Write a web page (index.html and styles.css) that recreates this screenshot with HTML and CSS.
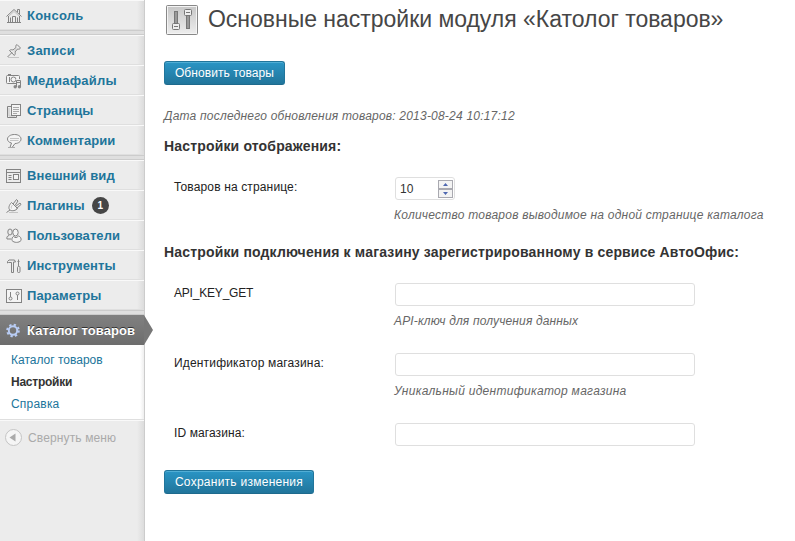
FILE: index.html
```
<!DOCTYPE html>
<html lang="ru">
<head>
<meta charset="utf-8">
<title>Основные настройки модуля</title>
<link rel="stylesheet" href="styles.css">
</head>
<body>
<div class="layout">
<nav class="menu">
  <a class="item wide"><svg class="icon" viewBox="0 0 16 16"><path d="M.5 8.500 8 1.500l7.500 7M2.500 8v6.500h11V8M11.500 4V1.500h2V6" /><path class="shade" d="M3 8 8 3.500 13 8"/><path d="M6.500 14.500v-6h3v6M4.500 14V9.500M11.500 14V9.500M1 14.500h14"/></svg><span>Консоль</span></a>
  <div class="separator"></div>
  <a class="item wide"><svg class="icon" viewBox="0 0 16 16"><path class="shade" d="M2 14.500h11"/><path d="M1.500 14 6 9.500M3.500 7.500c1-1 2.500-.8 3.500-.5L10 4.500C9.500 3 10 2 11 1.500l3.500 3.500c-.5 1-1.500 1.500-3 1L9 9c.5 1 .3 2.500-.7 3.500z"/><path class="shade" d="M8 8.500 11 5.500"/></svg><span>Записи</span></a>
  <a class="item wide"><svg class="icon" viewBox="0 0 16 16"><rect class="paper" x=".5" y="2.500" width="13" height="8" rx="1"/><path d="M2 1.500h3M3.500 4v5"/><circle cx="7.500" cy="6.500" r="2.500"/><path class="halo" d="M10 6h6v10H6v-4h4z"/><path d="M10.500 14V7.500h4V14M10.500 9.500h4"/><circle class="fill" cx="9.200" cy="13.800" r="1.700"/><circle class="fill" cx="13.400" cy="13.800" r="1.700"/></svg><span>Медиафайлы</span></a>
  <a class="item"><svg class="icon" viewBox="0 0 16 16"><path d="M5 3.500H1.500v11h9V13"/><path class="shade" d="M3 5v8h6"/><rect class="paper" x="5.500" y="1.500" width="9" height="11"/><path class="thin" d="M7 4.500h6M7 6.500h6M7 8.500h6M7 10.500h4"/></svg><span>Страницы</span></a>
  <a class="item"><svg class="icon" viewBox="0 0 16 16"><path class="paper" d="M8.500 1.500c4 0 6.500 2 6.500 4.500s-2.500 4.500-6 4.500L6 14.500H4L5.500 10C3 9.500 1.500 8 1.500 6c0-2.500 3-4.500 7-4.500z"/><path class="shade" d="M4 5.500h9M4 7.500h8.500"/><path class="thin" d="M2 14.500h7"/></svg><span>Комментарии</span></a>
  <div class="separator"></div>
  <a class="item"><svg class="icon" viewBox="0 0 16 16"><rect x=".5" y="1.500" width="14" height="13"/><path d="M1 4.500h13M2.500 7.500h3M2.500 9.500h3M2.500 11.500h3"/><rect class="paper" x="7.500" y="6.500" width="5" height="5"/></svg><span>Внешний вид</span></a>
  <a class="item"><svg class="icon" viewBox="0 0 16 16"><path class="shade" d="M3 14.500h9"/><path class="paper" d="M5.500 4.500 11.500 10.500C10 12.500 6 13.500 4 12S3 7 5.500 4.500z"/><path d="m7 6 3.500-4.500L12 3 9 7.500M9.500 8.500 14 5l1 1.500-4.500 4M4 12l-3.500 2.500"/><path class="shade" d="M6.500 7C5.500 8 5 9.500 5.500 10.500"/></svg><span>Плагины</span><b class="badge">1</b></a>
  <a class="item"><svg class="icon" viewBox="0 0 16 16"><ellipse cx="4" cy="4" rx="2.200" ry="3"/><path d="M3 7.500C1 8 .5 9.500 1 11h4"/><ellipse class="paper" cx="9.500" cy="4.500" rx="2.700" ry="3.500"/><path class="paper" d="M7.500 8.500c2 1.500 3 1.500 5-.5 2 .5 3 2.500 2.500 4.500-2 2.500-7 2.500-9 0-.5-2 .5-3.500 1.500-4z"/></svg><span>Пользователи</span></a>
  <a class="item"><svg class="icon" viewBox="0 0 16 16"><path d="M1.500 5V3.500L3 2h5.500l1 2H7.500v10.500h-2V4.500h-3z"/><path d="M12.500 1.500V8M11.500 3.500h2"/><rect x="11.500" y="8.500" width="2.500" height="6" rx="1"/></svg><span>Инструменты</span></a>
  <a class="item"><svg class="icon" viewBox="0 0 16 16"><rect class="paper" x=".5" y="1.500" width="15" height="13"/><path d="M4.500 4v5M11.500 7v5"/><circle cx="4.500" cy="10.500" r="1.500"/><circle cx="11.500" cy="5.500" r="1.500"/></svg><span>Параметры</span></a>
  <div class="separator"></div>
  <a class="item current"><svg class="icon gear" viewBox="0 0 16 16"><circle class="teeth" cx="7" cy="7.500" r="5.800"/><circle class="ring" cx="7" cy="7.500" r="4.200"/></svg><span>Каталог товаров</span><svg class="arrow" viewBox="0 0 9 30"><path d="M0 0 9 15 0 30z"/></svg></a>
  <div class="submenu">
    <a class="sub-a">Каталог товаров</a>
    <a class="sub-current">Настройки</a>
    <a class="sub-b">Справка</a>
  </div>
  <a class="collapse"><svg viewBox="0 0 18 18"><circle cx="8.500" cy="8.500" r="8"/><path d="M4.500 8.500l6-4v8z"/></svg><span>Свернуть меню</span></a>
</nav>
<main class="content">
  <header class="heading">
    <svg class="heading-icon" viewBox="0 0 34 32"><defs><linearGradient id="panel" x2="0" y2="1"><stop stop-color="#c6c6c6"/><stop offset="1" stop-color="#eee"/></linearGradient></defs><rect x="1.500" y=".5" width="31" height="29" rx="1" fill="url(#panel)" stroke="#888"/><rect x="2.500" y="1.500" width="29" height="27" fill="none" stroke="#f4f4f4"/><g fill="#999" stroke="#777"><rect x="9.500" y="6.500" width="3" height="13"/><rect x="21.500" y="10.500" width="3" height="13"/></g><g fill="#eee" stroke="#777"><rect x="7.500" y="18.500" width="7" height="6" rx="1"/><rect x="19.500" y="4.500" width="7" height="6" rx="1"/><path d="M9 21.500h4M21 7.500h4"/></g></svg>
    <h1>Основные настройки модуля «Католог товаров»</h1>
  </header>
  <button class="button update">Обновить товары</button>
  <p class="hint updated">Дата последнего обновления товаров: 2013-08-24 10:17:12</p>
  <h3 class="h-display">Настройки отображения:</h3>
  <div class="row row-count"><label class="l-count">Товаров на странице:</label><div><div class="field number"><span>10</span><svg class="spinner" viewBox="0 0 15 18"><g fill="#f3f3f3" stroke="#a9a9b0"><rect x=".5" y=".5" width="14" height="8"/><rect x=".5" y="9.500" width="14" height="8"/></g><path d="M5 6h5L7.500 3zM5 12h5l-2.500 3z" fill="#4f68b0"/></svg></div><p class="hint h-count">Количество товаров выводимое на одной странице каталога</p></div></div>
  <h3 class="h-connect">Настройки подключения к магазину зарегистрированному в сервисе АвтоОфис:</h3>
  <div class="row"><label class="l-api">API_KEY_GET</label><div><input class="field" type="text"><p class="hint h-api">API-ключ для получения данных</p></div></div>
  <div class="row"><label class="l-shop">Идентификатор магазина:</label><div><input class="field" type="text"><p class="hint h-shop">Уникальный идентификатор магазина</p></div></div>
  <div class="row row-last"><label class="l-id">ID магазина:</label><div><input class="field" type="text"></div></div>
  <button class="button save">Сохранить изменения</button>
</main>
</div>
</body>
</html>
```
FILE: styles.css
```
* { box-sizing: border-box; }
body { margin: 0; background: #fff; color: #333; font: 12px/16px "Liberation Sans", Arial, sans-serif; overflow: hidden; }
h1, h3, p { margin: 0; }
.layout { display: flex; height: 541px; }
.menu { width: 145px; flex: none; background: #ececec linear-gradient(to right, transparent 137px, #dcdcdc 144px); border-right: 1px solid #ccc; }
.item { display: flex; align-items: center; height: 30px; padding: 1px 0 0 6px; border-top: 1px solid #f9f9f9; border-bottom: 1px solid #dfdfdf; color: #21759b; font-size: 13px; font-weight: bold; white-space: nowrap; }
.item span { margin-left: 5px; letter-spacing: .07px; }
.wide span { letter-spacing: .24px; }
.icon { width: 16px; height: 16px; flex: none; fill: none; stroke: #838383; stroke-width: 1; }
.fill { fill: #888; stroke: none; }
.shade { stroke: #c4c4c4; }
.thin { stroke: #aaa; }
.paper { fill: #f4f4f4; }
.halo { fill: #ececec; stroke: none; }
.separator { height: 5px; background: #dfdfdf; border-top: 1px solid #ccc; border-bottom: 1px solid #ccc; }
.badge { width: 17px; height: 17px; margin-left: 7px; border-radius: 9px; background: #464646; color: #fff; font-size: 10px; line-height: 17px; text-align: center; }
.current { position: relative; background: linear-gradient(#808080, #6d6d6d); border-color: #808080 transparent #6d6d6d; color: #fff; text-shadow: 0 -1px 0 #333; }
.arrow { position: absolute; left: 144px; top: -1px; width: 9px; height: 30px; fill: #777; }
.gear { stroke: #b9cdf5; }
.teeth { stroke-width: 2; stroke-dasharray: 2.280 2.280; }
.ring { stroke-width: 2; }
.submenu { height: 75px; padding-top: 4px; background: #fff linear-gradient(to right, transparent 140px, #eee 144px); border-bottom: 1px solid #dfdfdf; }
.submenu a { display: block; height: 22px; padding-left: 11px; line-height: 22px; color: #21759b; }
.submenu .sub-current { color: #333; font-weight: bold; letter-spacing: -.25px; }
.submenu .sub-b { letter-spacing: .2px; }
.collapse { display: flex; align-items: center; height: 35px; padding-left: 5px; border-top: 1px solid #f9f9f9; color: #aaa; letter-spacing: .13px; }
.collapse svg { width: 18px; height: 18px; margin-right: 5px; fill: #f5f5f5; stroke: #c4c4c4; }
.collapse path { fill: #aaa; stroke: none; }
.content { flex: 1; padding-left: 19px; min-width: 0; }
.heading { display: flex; height: 61px; padding-top: 5px; }
.heading-icon { width: 34px; height: 32px; margin-left: 1px; }
h1 { margin-left: 9px; color: #464646; font-size: 23px; font-weight: normal; line-height: 29px; letter-spacing: -.02px; white-space: nowrap; }
.button { display: block; height: 24px; padding: 0; border: 1px solid #21759b; border-bottom-color: #1e6a8d; border-radius: 3px; background: linear-gradient(#2a95c5, #21759b); box-shadow: inset 0 1px 0 rgba(120,200,230,.5); color: #fff; font: 12px/22px "Liberation Sans", Arial, sans-serif; text-shadow: 0 1px 0 rgba(0,0,0,.1); white-space: nowrap; }
.update { width: 121px; letter-spacing: .08px; }
.save { width: 150px; letter-spacing: .26px; }
.hint { color: #666; font-style: italic; white-space: nowrap; }
.updated { height: 30px; margin-top: 23px; line-height: 17px; letter-spacing: .21px; }
h3 { height: 18px; color: #333; font-size: 14px; line-height: 18px; letter-spacing: .165px; white-space: nowrap; }
.h-display { margin-top: -1px; }
.row { display: grid; grid-template-columns: 221px 1fr; height: 70px; padding-left: 10px; }
.row label { padding-top: 2px; color: #222; }
.row-count { height: 66px; margin-top: 22px; }
.l-count { letter-spacing: .14px; }
.l-api { letter-spacing: -.2px; }
.l-shop { letter-spacing: .17px; }
.l-id { letter-spacing: .1px; }
.field { display: block; width: 300px; height: 23px; border: 1px solid #dfdfdf; border-radius: 3px; background: #fff; outline: 0; }
.number { display: flex; align-items: center; justify-content: space-between; width: 60px; padding: 0 1px 0 4px; color: #333; }
.spinner { width: 15px; height: 18px; }
.row .hint { margin: 7px 0 0 -1px; }
.h-count { letter-spacing: .23px; }
.h-api { letter-spacing: .15px; }
.h-shop { letter-spacing: .29px; }
.h-connect { margin-bottom: 22px; }
.row-last { height: 47px; }
```
